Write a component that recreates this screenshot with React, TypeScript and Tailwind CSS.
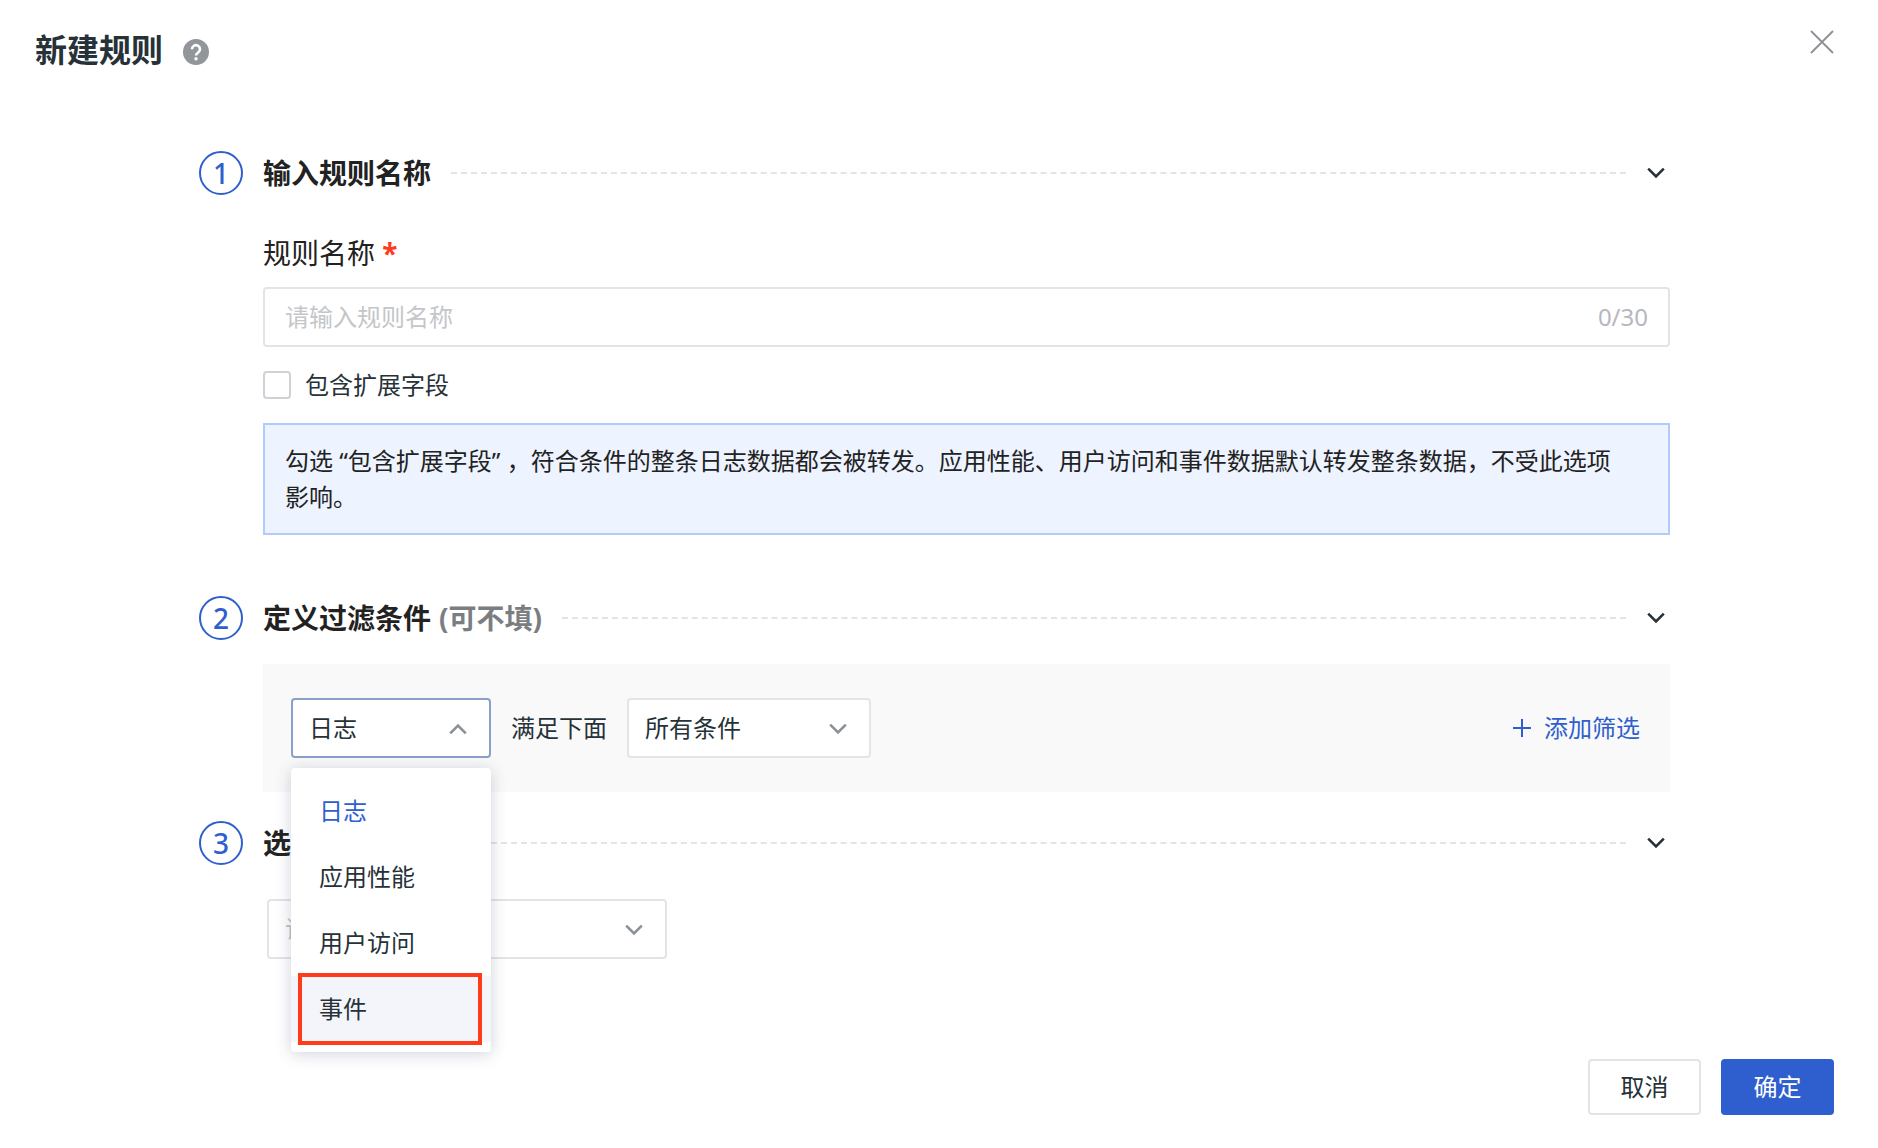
import React, { useState } from "react";

const sources = ["日志", "应用性能", "用户访问", "事件"];

function Chevron({ className = "" }: { className?: string }) {
  return (
    <svg
      viewBox="0 0 18 12"
      className={`w-[18px] h-3 fill-none stroke-current ${className}`}
      strokeWidth="2.6"
    >
      <path d="M1.2 1.6 9 9.4l7.8-7.8" />
    </svg>
  );
}

interface ISelect {
  label: string;
  options: string[];
  className: string;
  active?: boolean;
  placeholder?: boolean;
}

function Select({
  label,
  options,
  className,
  active,
  placeholder,
}: ISelect) {
  return (
    <div className={`relative ${className}`}>
      <select
        aria-label={label}
        className={`block w-full h-[60px] pl-4 pr-12 appearance-none rounded border-2 bg-white outline-none ${
          active ? "border-[#8ba0c8]" : "border-[#e4e4e4]"
        } ${placeholder ? "text-[#c0c2c6]" : ""}`}
      >
        {options.map((option) => (
          <option key={option}>{option}</option>
        ))}
      </select>
      <Chevron
        className={`absolute right-6 top-[25px] pointer-events-none text-[#8c9196] ${
          active ? "rotate-180" : ""
        }`}
      />
    </div>
  );
}

interface ISection {
  step: number;
  title: string;
  hint?: string;
  className?: string;
  children: React.ReactNode;
}

function Section({ step, title, hint, className = "", children }: ISection) {
  return (
    <section className={className}>
      <div className="flex items-center">
        <span className="flex items-center justify-center w-11 h-11 mr-5 rounded-full border-2 border-[#2f5fce] text-[28px] leading-10 font-medium text-[#2f5fce]">
          {step}
        </span>
        <h2 className="text-[28px] leading-10 font-bold text-[#222222]">
          {title}
          {hint && <span className="ml-2 text-[#7b7e81]">{hint}</span>}
        </h2>
        <div className="flex-1 ml-5 mr-4 border-t-2 border-dashed border-[#e4e4e4]" />
        <button
          type="button"
          aria-label={title}
          className="flex items-center justify-center w-7 h-11"
        >
          <Chevron />
        </button>
      </div>
      <div className="pl-16">{children}</div>
    </section>
  );
}

export default function App() {
  const [name, setName] = useState("");
  const [source, setSource] = useState("日志");

  return (
    <div className="min-h-screen bg-white text-2xl leading-9 text-[#263238] font-['Noto_Sans','Noto_Sans_CJK_SC',sans-serif]">
      <header className="flex items-start justify-between pt-[30px] pl-[35px] pr-11">
        <div className="flex items-center">
          <h1 className="text-[32px] leading-10 font-bold">新建规则</h1>
          <svg viewBox="0 0 26 26" className="w-[26px] h-[26px] mt-1 ml-5">
            <circle cx="13" cy="13" r="13" fill="#929599" />
            <path
              d="M9 10.2a4 4 0 1 1 6.3 3.2c-1.5 1-2.3 1.5-2.3 3"
              fill="none"
              stroke="#fff"
              strokeWidth="2.6"
            />
            <circle cx="13" cy="19.8" r="1.7" fill="#fff" />
          </svg>
        </div>
        <button type="button" aria-label="关闭">
          <svg
            viewBox="0 0 24 24"
            className="w-6 h-6 fill-none stroke-[#8c8f93]"
            strokeWidth="1.8"
          >
            <path d="M1 1l22 22M23 1L1 23" />
          </svg>
        </button>
      </header>

      <form
        className="pt-[81px] pl-[199px] pr-[208px]"
        onSubmit={(e) => e.preventDefault()}
      >
        <Section step={1} title="输入规则名称">
          <label
            htmlFor="rule-name"
            className="block pt-[38px] text-[28px] leading-10 text-[#222222]"
          >
            规则名称 <span className="font-bold text-[#ff3b1a]">*</span>
          </label>
          <div className="flex items-center h-[60px] mt-[14px] px-5 rounded border-2 border-[#e4e4e4]">
            <input
              id="rule-name"
              value={name}
              maxLength={30}
              onChange={(e) => setName(e.target.value)}
              placeholder="请输入规则名称"
              className="flex-1 min-w-0 outline-none placeholder:text-[#c4c6ca]"
            />
            <span className="text-[#b6b8bc]">{name.length}/30</span>
          </div>
          <label className="flex items-center mt-5">
            <input
              type="checkbox"
              className="w-7 h-7 mr-[14px] appearance-none rounded border-2 border-[#d0d1d6] checked:bg-[#2f5fce]"
            />
            包含扩展字段
          </label>
          <p className="mt-5 px-5 py-[18px] border-2 border-[#b3cafc] bg-[#edf3ff] text-[#222222]">
            勾选 “包含扩展字段”
            ，符合条件的整条日志数据都会被转发。应用性能、用户访问和事件数据默认转发整条数据，不受此选项
            <br />
            影响。
          </p>
        </Section>

        <Section
          step={2}
          title="定义过滤条件"
          hint="(可不填)"
          className="mt-[61px]"
        >
          <div className="flex items-center mt-6 pl-7 pr-[30px] py-[34px] bg-[#f9f9f9]">
            <div className="relative w-[200px]">
              <Select
                label="数据来源"
                options={[source]}
                className="w-full"
                active
              />
              <ul className="absolute left-0 top-[70px] z-10 w-full py-[10px] rounded bg-white shadow-[0_2px_16px_rgba(40,55,90,0.22)]">
                {sources.map((item) => (
                  <li key={item}>
                    <button
                      type="button"
                      onClick={() => setSource(item)}
                      className={`relative block w-full h-[66px] px-7 text-left ${
                        item === source ? "text-[#2f5fce]" : ""
                      } ${item === "事件" ? "bg-[#f4f5fa]" : ""}`}
                    >
                      {item}
                      {item === "事件" && (
                        <span className="absolute -inset-y-[3px] left-[7px] right-[9px] border-4 border-[#ff3b1a]" />
                      )}
                    </button>
                  </li>
                ))}
              </ul>
            </div>
            <span className="mx-5">满足下面</span>
            <Select
              label="匹配方式"
              options={["所有条件", "任意条件"]}
              className="w-[244px]"
            />
            <button
              type="button"
              className="flex items-center gap-3 ml-auto text-[#2f5fce]"
            >
              <svg
                viewBox="0 0 20 20"
                className="w-5 h-5 fill-none stroke-current"
                strokeWidth="2"
              >
                <path d="M10 1v18M1 10h18" />
              </svg>
              添加筛选
            </button>
          </div>
        </Section>

        <Section step={3} title="选择归档类型" className="mt-[29px]">
          <div className="pt-[34px] pl-1">
            <Select
              label="归档类型"
              options={["请选择归档类型"]}
              className="w-[400px]"
              placeholder
            />
          </div>
        </Section>
      </form>

      <footer className="flex justify-end gap-5 mt-[100px] pr-11 pb-8">
        <button
          type="button"
          className="w-[113px] h-14 rounded border-2 border-[#e4e4e4]"
        >
          取消
        </button>
        <button
          type="button"
          className="w-[113px] h-14 rounded bg-[#2f5fce] text-white"
        >
          确定
        </button>
      </footer>
    </div>
  );
}
